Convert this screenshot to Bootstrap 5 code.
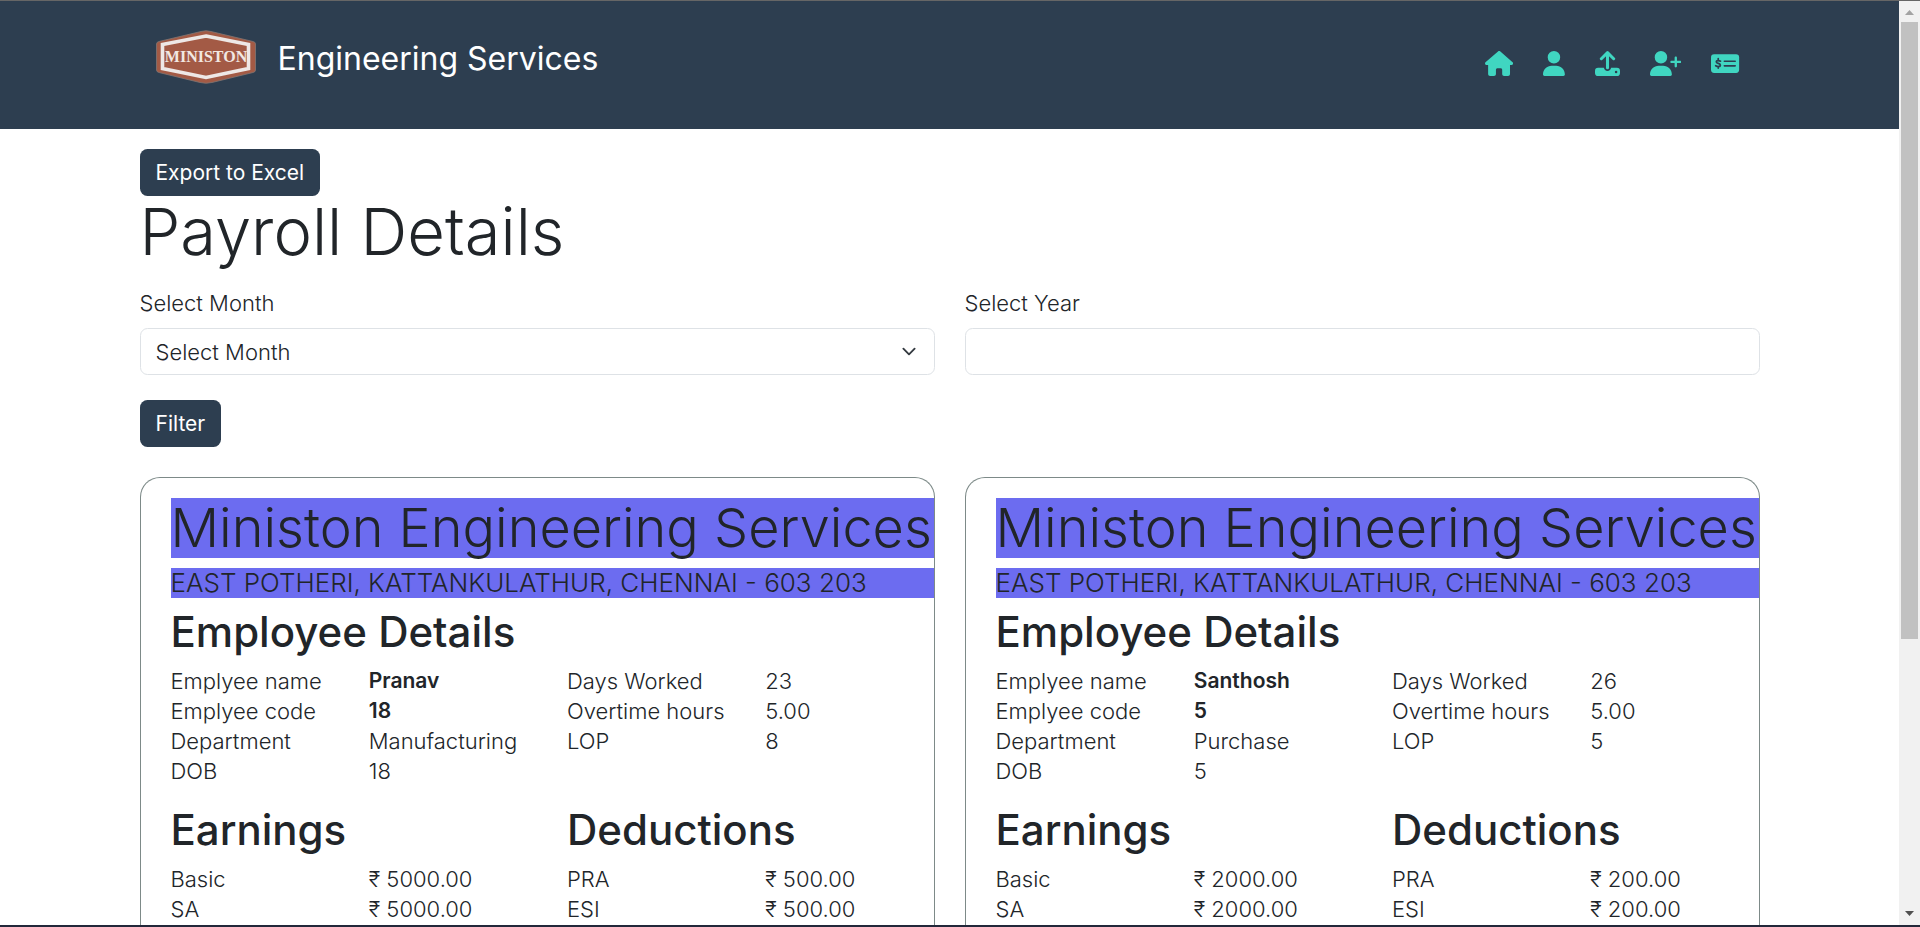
<!DOCTYPE html>
<html lang="en">
<head>
<meta charset="utf-8">
<meta name="viewport" content="width=device-width, initial-scale=1">
<title>Payroll Details</title>
<link href="https://cdn.jsdelivr.net/npm/bootstrap@5.3.0/dist/css/bootstrap.min.css" rel="stylesheet">
<style>
:root { font-size: 20px; --navy: #2d3e50; --mint: #40d6c1; --slip: #6c6cf0; }
body { font-family: Inter, "Liberation Sans", sans-serif; font-weight: 300; font-size: 22px; line-height: 30px; }
.window-frame { border-top: 1px solid #666; border-bottom: 2px solid #23283a; }
.page-width { max-width: 1650px; }
.site-header { background: var(--navy); min-height: 128px; }
.site-header .brand-link { font-size: 32px; font-weight: 400; margin: 0 0 12px 16px; gap: 22px; }
.brand-logo { width: 100px; height: 54px; margin-bottom: 4px; }
.icon-nav { gap: 30px; margin-bottom: 4px; }
.icon-nav a { color: var(--mint); }
.icon-nav svg { display: block; height: 25px; fill: currentColor; }
.btn-navy, .btn-navy:hover { background: var(--navy); color: #fff; }
.btn-navy { height: 47px; padding: 0 15px; font-size: 21px; line-height: 30px; }
.form-label { margin-bottom: 10px; }
.form-control, .form-select { height: 47px; font-size: 22px; line-height: 30px; font-weight: 300; }
.form-select { background-size: 20px 15px; }
.filter-btn { margin-top: 25px; }
.page-title { font-size: 65px; line-height: 72px; font-weight: 300; margin: 0 0 20px; }
.slip-row { margin-top: 30px; min-height: 0; }
.payslip { border: 1px solid #7d8a88; border-bottom: 0; border-radius: 20px 20px 0 0; padding-top: 20px; }
.payslip h2, .payslip h3, .payslip h4 { margin: 0 0 10px; }
.firm-name, .firm-address { background: var(--slip); margin-left: 30px !important; font-weight: 300; white-space: nowrap; }
.firm-name { font-size: 54px; line-height: 60px; }
.firm-address { font-size: 26px; line-height: 30px; }
.section-title { font-size: 42px; line-height: 48px; font-weight: 500; padding-left: 30px; }
.slip-table { table-layout: fixed; margin-bottom: 20px; }
.slip-table td, .slip-table th { width: 25%; padding: 0 0 0 30px; font-weight: 300; white-space: nowrap; }
.slip-table .strong-value { font-weight: 600; font-size: 21px; }
.scroll-rail { width: 21px; background: #f1f1f1; padding: 0 2px; }
.scroll-rail svg { height: 21px; flex: none; }
.scroll-thumb { background: #c1c1c1; height: 70%; }
</style>
</head>
<body>
<div class="window-frame d-flex vh-100 overflow-hidden">
  <div class="d-flex flex-column flex-grow-1 overflow-hidden">
    <header class="site-header d-flex flex-shrink-0">
      <nav class="container page-width d-flex align-items-center justify-content-between">
        <a href="#" class="brand-link d-flex align-items-center text-white text-decoration-none">
          <svg class="brand-logo" viewBox="0 0 100 54" role="img" aria-label="Ministon">
            <path d="M45 1.500Q50 0 55 1.500L97 11.500Q99.500 12 99.500 14V40Q99.500 42 97 42.500L56 52.500Q50 54 44 52.500L3 42.500Q.5 42 .5 40V14Q.5 12 3 11.500Z" fill="#a35a45" stroke="#817673" stroke-width=".8"/>
            <path d="M50 6L92.500 14.500V38.500L50 47.500L6.500 38.500V14.500Z" fill="none" stroke="#eee8e6" stroke-width="3.600"/>
            <text x="50" y="31.500" text-anchor="middle" font-family="Liberation Serif, serif" font-weight="700" font-size="16" fill="#f2e8e2">MINISTON</text>
          </svg>
          <span>Engineering Services</span>
        </a>
        <div class="icon-nav d-flex align-items-center me-3">
          <a href="#" aria-label="Home"><svg viewBox="0 0 576 512"><path d="M575.800 255.500c0 18-15 32.100-32 32.100h-32l.7 160.200c0 2.700-.2 5.400-.5 8.100V472c0 22.100-17.900 40-40 40H392c-22.100 0-40-17.900-40-40V384c0-17.700-14.300-32-32-32H256c-17.700 0-32 14.300-32 32v88c0 22.100-17.900 40-40 40H104c-22.100 0-40-17.900-40-40V287.600H32c-18 0-32-14-32-32.100c0-9 3-17 10-24L266.400 8c7-7 15-8 22-8s15 2 21 7L564.800 231.500c8 7 12 15 11 24z"/></svg></a>
          <a href="#" aria-label="Employees"><svg viewBox="0 0 448 512"><path d="M224 256A128 128 0 1 0 224 0a128 128 0 1 0 0 256zm-45.700 48C79.800 304 0 383.800 0 482.300C0 498.700 13.300 512 29.700 512H418.300c16.400 0 29.700-13.300 29.700-29.700C448 383.800 368.200 304 269.700 304H178.300z"/></svg></a>
          <a href="#" aria-label="Upload"><svg viewBox="0 0 512 512"><path fill-rule="evenodd" d="M64 344H182Q194 408 256 408T330 344H448A64 64 0 0 1 512 408V448A64 64 0 0 1 448 512H64A64 64 0 0 1 0 448V408A64 64 0 0 1 64 344ZM432 404a26 26 0 1 0 0 52a26 26 0 1 0 0-52Z"/><path d="M256 345V36M130 158L256 34L382 158" fill="none" stroke="currentColor" stroke-width="62" stroke-linecap="round" stroke-linejoin="round"/></svg></a>
          <a href="#" aria-label="Add employee"><svg viewBox="0 0 640 512"><path d="M96 128a128 128 0 1 1 256 0A128 128 0 1 1 96 128zM0 482.300C0 383.800 79.800 304 178.300 304h91.400C368.200 304 448 383.800 448 482.300c0 16.400-13.300 29.700-29.700 29.700H29.700C13.300 512 0 498.700 0 482.300zM504 312V248H440c-13.300 0-24-10.700-24-24s10.700-24 24-24h64V136c0-13.300 10.700-24 24-24s24 10.700 24 24v64h64c13.300 0 24 10.700 24 24s-10.700 24-24 24H552v64c0 13.300-10.700 24-24 24s-24-10.700-24-24z"/></svg></a>
          <a href="#" aria-label="Payroll"><svg viewBox="0 0 576 512"><rect y="64" width="576" height="384" rx="64"/><g fill="none" stroke="#2d3e50" stroke-width="32" stroke-linecap="round"><path d="M272 208H496M272 304H496"/><path d="M196 208C170 192 108 186 108 220C108 262 192 246 192 290C192 328 130 322 96 300M148 158V188M148 320V350" stroke-width="36"/></g></svg></a>
        </div>
      </nav>
    </header>
    <main class="container page-width d-flex flex-column flex-grow-1 overflow-hidden">
      <div class="mt-3"><button type="button" class="btn btn-navy">Export to Excel</button></div>
      <h1 class="page-title">Payroll Details</h1>
      <form>
        <div class="row">
          <div class="col-6">
            <label class="form-label" for="month">Select Month</label>
            <select class="form-select" id="month"><option>Select Month</option></select>
          </div>
          <div class="col-6">
            <label class="form-label" for="year">Select Year</label>
            <input class="form-control" id="year" type="text">
          </div>
        </div>
        <button type="button" class="btn btn-navy filter-btn">Filter</button>
      </form>
      <div class="row flex-grow-1 slip-row">
        <div class="col-6">
          <section class="payslip h-100 overflow-hidden">
            <h2 class="firm-name">Ministon Engineering Services</h2>
            <h4 class="firm-address">EAST POTHERI, KATTANKULATHUR, CHENNAI - 603 203</h4>
            <h3 class="section-title">Employee Details</h3>
            <table class="slip-table w-100">
              <tr><th>Emplyee name</th><td class="strong-value">Pranav</td><th>Days Worked</th><td>23</td></tr>
              <tr><th>Emplyee code</th><td class="strong-value">18</td><th>Overtime hours</th><td>5.00</td></tr>
              <tr><th>Department</th><td>Manufacturing</td><th>LOP</th><td>8</td></tr>
              <tr><th>DOB</th><td>18</td><td></td><td></td></tr>
            </table>
            <div class="row g-0">
              <h3 class="section-title col-6">Earnings</h3>
              <h3 class="section-title col-6">Deductions</h3>
            </div>
            <table class="slip-table w-100">
              <tr><th>Basic</th><td>₹ 5000.00</td><th>PRA</th><td>₹ 500.00</td></tr>
              <tr><th>SA</th><td>₹ 5000.00</td><th>ESI</th><td>₹ 500.00</td></tr>
            </table>
          </section>
        </div>
        <div class="col-6">
          <section class="payslip h-100 overflow-hidden">
            <h2 class="firm-name">Ministon Engineering Services</h2>
            <h4 class="firm-address">EAST POTHERI, KATTANKULATHUR, CHENNAI - 603 203</h4>
            <h3 class="section-title">Employee Details</h3>
            <table class="slip-table w-100">
              <tr><th>Emplyee name</th><td class="strong-value">Santhosh</td><th>Days Worked</th><td>26</td></tr>
              <tr><th>Emplyee code</th><td class="strong-value">5</td><th>Overtime hours</th><td>5.00</td></tr>
              <tr><th>Department</th><td>Purchase</td><th>LOP</th><td>5</td></tr>
              <tr><th>DOB</th><td>5</td><td></td><td></td></tr>
            </table>
            <div class="row g-0">
              <h3 class="section-title col-6">Earnings</h3>
              <h3 class="section-title col-6">Deductions</h3>
            </div>
            <table class="slip-table w-100">
              <tr><th>Basic</th><td>₹ 2000.00</td><th>PRA</th><td>₹ 200.00</td></tr>
              <tr><th>SA</th><td>₹ 2000.00</td><th>ESI</th><td>₹ 200.00</td></tr>
            </table>
          </section>
        </div>
      </div>
    </main>
  </div>
  <div class="scroll-rail d-flex flex-column flex-shrink-0" aria-hidden="true">
    <svg viewBox="0 0 17 21"><path d="M4 14L8.500 9L13 14Z" fill="#a3a3a3"/></svg>
    <div class="flex-grow-1"><div class="scroll-thumb"></div></div>
    <svg viewBox="0 0 17 21"><path d="M4 7H13L8.500 12Z" fill="#505050"/></svg>
  </div>
</div>
<script src="https://cdn.jsdelivr.net/npm/bootstrap@5.3.0/dist/js/bootstrap.bundle.min.js"></script>
</body>
</html>
